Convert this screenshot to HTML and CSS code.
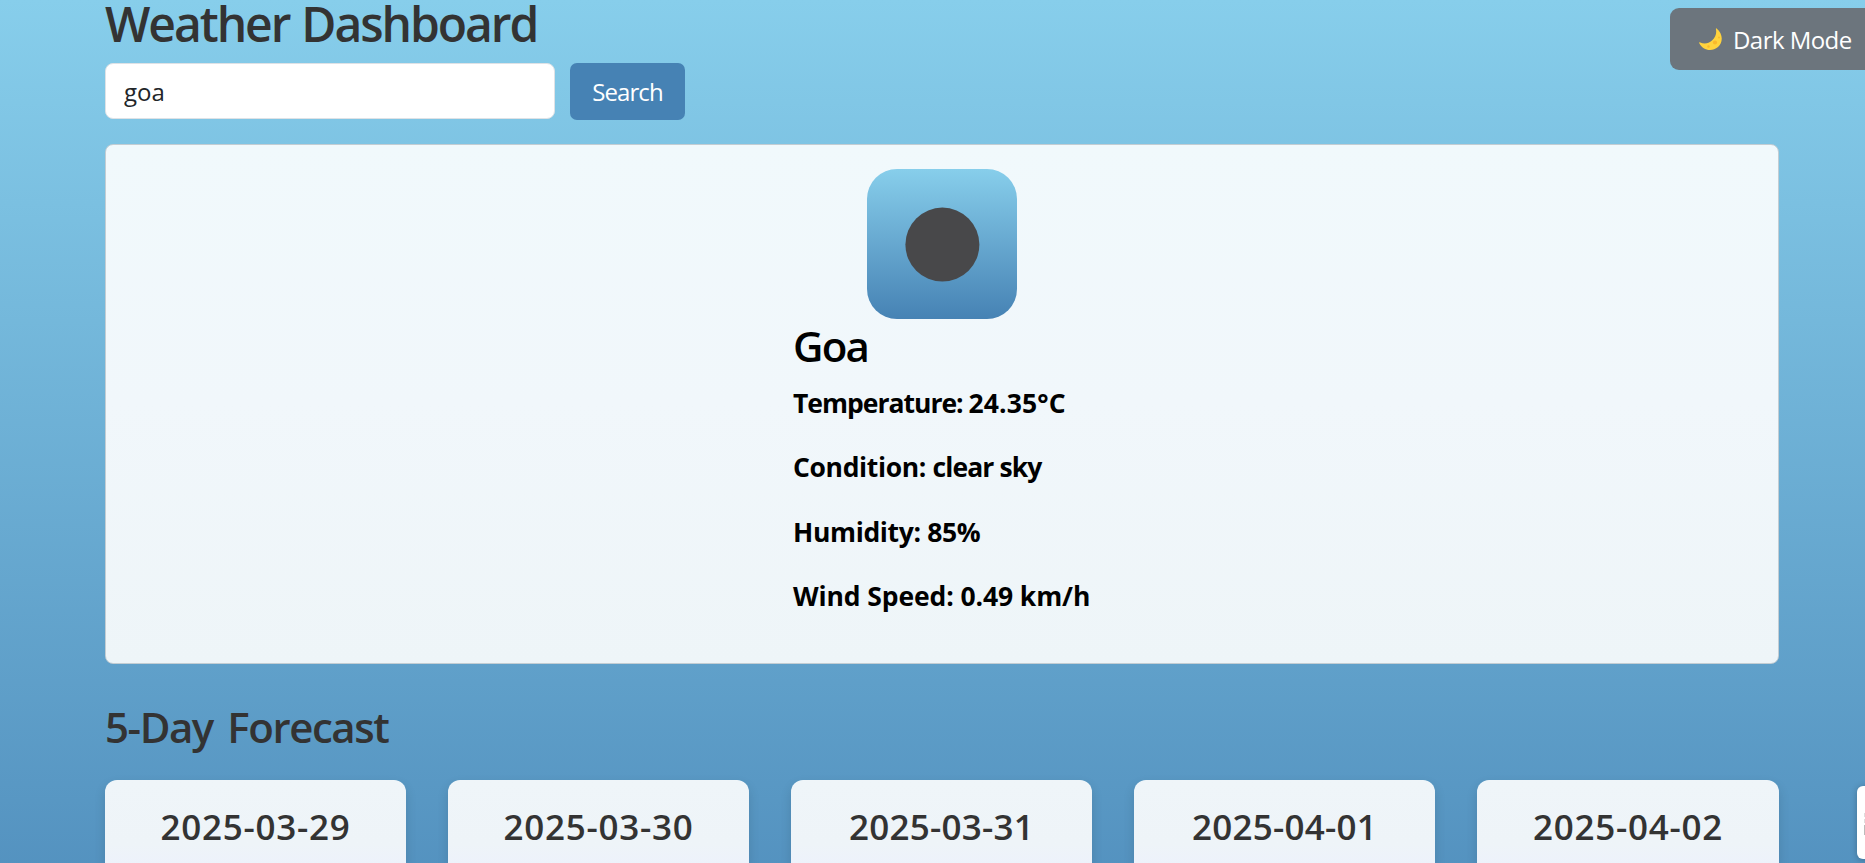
FILE: index.html
```html
<!DOCTYPE html>
<html lang="en">
<head>
<meta charset="utf-8">
<title>Weather Dashboard</title>
<link rel="stylesheet" href="styles.css">
</head>
<body>
<main class="container">
  <h1 class="title">Weather Dashboard</h1>
  <form class="search">
    <input class="search-input" type="text" value="goa">
    <button class="search-btn" type="button">Search</button>
  </form>
  <section class="current">
    <svg class="icon" viewBox="0 0 150 150"><circle cx="75.4" cy="75.6" r="37" fill="#48484a"/></svg>
    <div class="details">
      <h2 class="city">Goa</h2>
      <p class="temp">Temperature: <span>24.35°C</span></p>
      <p class="cond">Condition: <span>clear sky</span></p>
      <p class="hum">Humidity: 85%</p>
      <p class="wind">Wind Speed: 0.49 km/h</p>
    </div>
  </section>
  <h2 class="forecast-title">5-Day Forecast</h2>
  <section class="forecast">
    <div class="day"><h3>2025-03-29</h3></div>
    <div class="day"><h3>2025-03-30</h3></div>
    <div class="day"><h3 class="narrow">2025-03-31</h3></div>
    <div class="day"><h3 class="narrow">2025-04-01</h3></div>
    <div class="day"><h3>2025-04-02</h3></div>
  </section>
</main>
<button class="theme-btn" type="button">
  <svg class="moon" viewBox="0 0 23 23"><path d="M17.6.4C24.2 5.4 24.2 14.6 19 19 12.600 24.400 3.500 22.100.300 15.200c-.3-.8.2-1.100.900-.8C5 16.200 9.500 15.800 13 12.500 16.700 9.100 17.800 5.400 16.900 1c-.1-.6.2-.9.700-.6Z" fill="#ffd33d"/><g fill="#f9b92b"><circle cx="16" cy="14.500" r="2.100"/><circle cx="9.500" cy="18.500" r="1.200"/><circle cx="20" cy="9.500" r="1"/></g></svg>
  <span>Dark Mode</span>
</button>
<aside class="side-panel"><i></i><i></i><i></i></aside>
</body>
</html>
```
FILE: styles.css
```css
* { box-sizing: border-box; }
html, body { height: 863px; overflow: hidden; }
body {
  margin: 0;
  position: relative;
  font-family: "Open Sans", "Noto Sans", sans-serif;
  color: #333;
  background: linear-gradient(to bottom, #87ceeb 0, #4682b4 1105px);
}
h1, h2, h3, p { margin: 0; white-space: nowrap; }
.container { width: 1674px; height: 863px; margin-left: 105px; }
.title { height: 63px; font-size: 48px; font-weight: 570; line-height: 48px; letter-spacing: -2.050px; word-spacing: 1.500px; }
.search { display: flex; align-items: flex-start; gap: 15px; height: 81px; margin: 0; }
.search-input {
  width: 450px; height: 56px; padding: 1px 18px 0;
  border: 1px solid #dee2e6; border-radius: 8px;
  background: #fff; color: #212529; font: 24px "Open Sans", sans-serif;
}
.search-btn {
  width: 115px; height: 57px; padding: 0; border: 0; border-radius: 7px;
  background: #4682b4; color: #fff; font: 24px "Open Sans", sans-serif; letter-spacing: -.9px;
}
.current {
  display: flex; flex-direction: column; align-items: center;
  height: 520px; padding-top: 24px;
  border: 1px solid #c3cdd3; border-radius: 8px;
  background: linear-gradient(#f1f9fc, #f1f7fb 50%, #eef5f8);
  color: #000;
}
.icon { width: 150px; height: 150px; border-radius: 30px; background: linear-gradient(#87ceeb, #4682b4); }
.details { width: 298px; font-weight: 700; font-size: 26.500px; }
.city { height: 52px; font-size: 42px; font-weight: 570; line-height: 54px; letter-spacing: -1.800px; }
.details p { height: 64.400px; line-height: 64.400px; }
.temp { letter-spacing: -1px; }
.temp span { letter-spacing: .1px; }
.cond { letter-spacing: -.35px; }
.cond span { letter-spacing: -.9px; }
.hum { letter-spacing: -.35px; }
.wind { letter-spacing: -.1px; }
.forecast-title { height: 116px; padding-top: 36px; font-size: 42px; font-weight: 570; line-height: 54px; letter-spacing: -1.450px; word-spacing: 5px; }
.forecast { display: grid; grid-template-columns: repeat(5, 301px); gap: 42px; }
.day { height: 83px; padding-top: 22px; border-radius: 12px 12px 0 0; text-align: center; background: linear-gradient(#eff5f9, #eef4f8 64px, #edf2fb 84px); box-shadow: 0 5px 12px rgba(0, 0, 0, .12); }
.day:last-child { width: 302px; }
.day h3 { font-size: 35px; font-weight: 570; line-height: 49px; letter-spacing: .75px; }
.day .narrow { letter-spacing: .25px; }
.theme-btn {
  position: absolute; left: 1670px; top: 8px; width: 210px; height: 62px;
  display: flex; align-items: center; gap: 11px; padding: 1px 0 0 29px;
  border: 0; border-radius: 9px; background: #6c757d; color: #fff;
  font: 24px "Open Sans", sans-serif; letter-spacing: -.55px; white-space: nowrap;
}
.moon { width: 23px; height: 23px; flex: none; }
.side-panel {
  position: absolute; left: 1857px; top: 786px; width: 60px; height: 73px;
  padding: 27px 0 0 7px; border-radius: 6px; background: #fff; box-shadow: 0 1px 6px rgba(0, 0, 0, .25);
}
.side-panel i { display: block; height: 4px; margin-bottom: 2px; background: #ddd; }
.side-panel i:last-child { height: 10px; background: #bbb; }
```
